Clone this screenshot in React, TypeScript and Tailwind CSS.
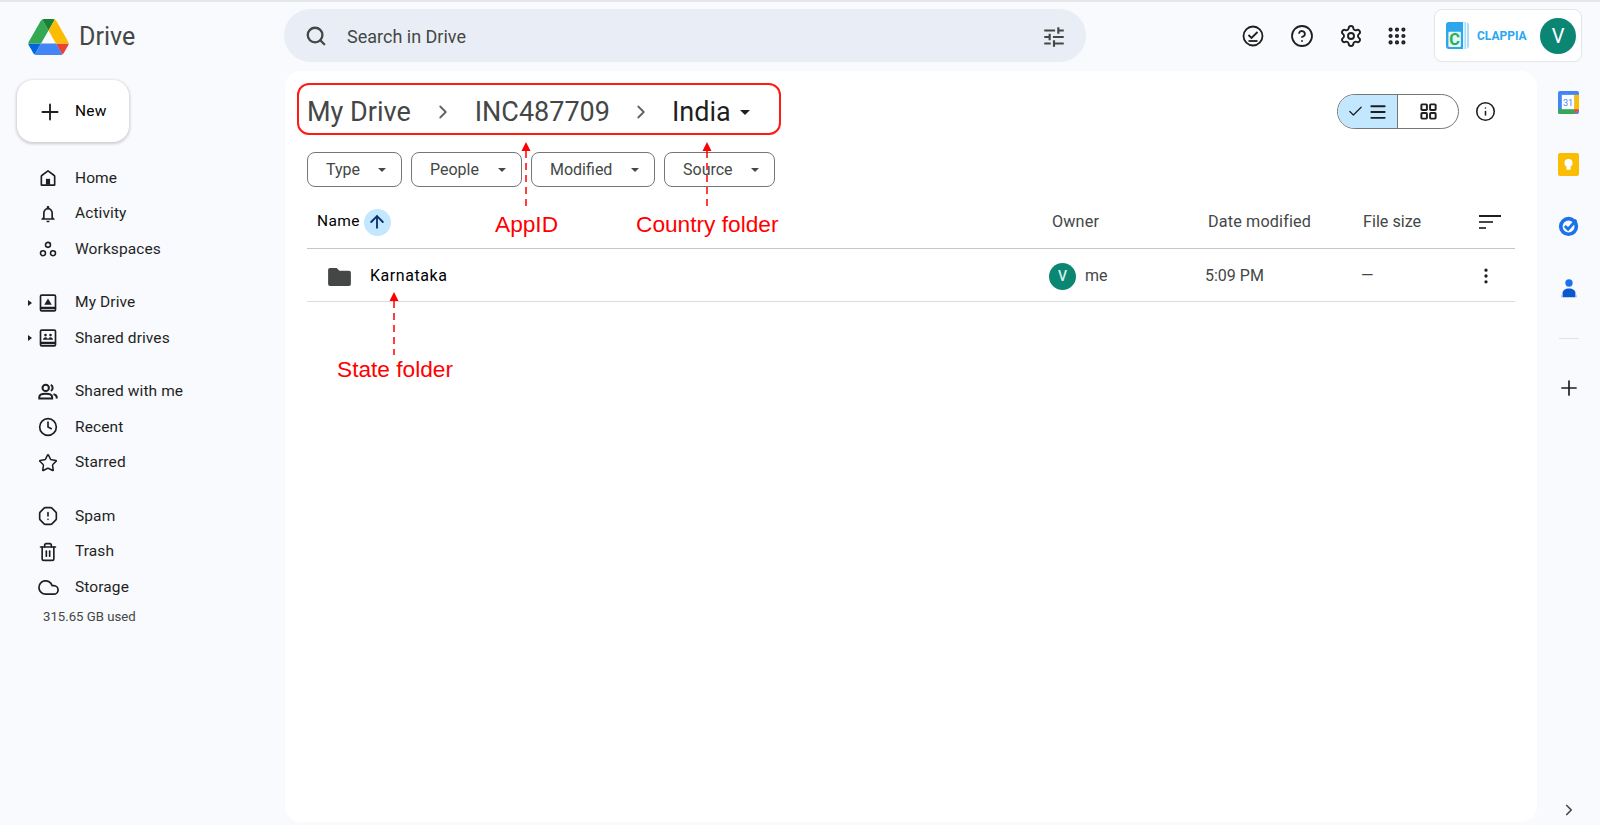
import type { ReactNode } from "react";
import {
  ArrowUp,
  Check,
  ChevronRight,
  CircleHelp,
  Clock,
  Cloud,
  EllipsisVertical,
  Grip,
  Info,
  LayoutGrid,
  Menu,
  OctagonAlert,
  Plus,
  Search,
  Settings,
  Star,
  Trash2,
} from "lucide-react";

const font = "font-['Roboto',sans-serif]";

function DriveLogo() {
  return (
    <svg viewBox="0 0 87.3 78" className="w-[41px] h-[36px]">
      <path d="m6.6 66.85 3.85 6.65c.8 1.4 1.95 2.5 3.3 3.3l13.75-23.8h-27.5c0 1.55.4 3.1 1.2 4.5z" fill="#0066da" />
      <path d="m43.65 25-13.75-23.8c-1.35.8-2.5 1.9-3.3 3.3l-25.4 44a9.06 9.06 0 0 0 -1.2 4.5h27.5z" fill="#34a853" />
      <path d="m73.55 76.8c1.35-.8 2.5-1.9 3.3-3.3l1.6-2.75 7.65-13.25c.8-1.4 1.2-2.95 1.2-4.5h-27.502l5.852 11.5z" fill="#ea4335" />
      <path d="m43.65 25 13.75-23.8c-1.35-.8-2.9-1.2-4.5-1.2h-18.5c-1.6 0-3.15.45-4.5 1.2z" fill="#188038" />
      <path d="m59.8 53h-32.3l-13.75 23.8c1.35.8 2.9 1.2 4.5 1.2h50.8c1.6 0 3.15-.45 4.5-1.2z" fill="#4285f4" />
      <path d="m73.4 26.5-12.7-22c-.8-1.4-1.95-2.5-3.3-3.3l-13.75 23.8 16.15 28h27.45c0-1.55-.4-3.1-1.2-4.5z" fill="#fbbc04" />
    </svg>
  );
}

function HomeIcon() {
  return (
    <svg viewBox="0 0 24 24" className="w-[20px] h-[20px]" fill="none" stroke="#1f1f1f" strokeWidth="2">
      <path d="M4 20.5V10c0-.5.2-.8.5-1L12 3.5 19.5 9c.3.2.5.5.5 1v10.5z" strokeLinejoin="round" />
      <rect x="9.5" y="13" width="5" height="7" fill="#1f1f1f" stroke="none" />
    </svg>
  );
}

function BellIcon() {
  return (
    <svg viewBox="0 0 24 24" className="w-[20px] h-[20px]" fill="#1f1f1f">
      <path d="M12 22c1.1 0 2-.9 2-2h-4c0 1.1.9 2 2 2zm6-6v-5c0-3.07-1.63-5.64-4.5-6.32V4c0-.83-.67-1.5-1.5-1.5s-1.5.67-1.5 1.5v.68C7.64 5.36 6 7.92 6 11v5l-2 2v1h16v-1l-2-2zm-2 1H8v-6c0-2.48 1.51-4.5 4-4.5s4 2.02 4 4.5v6z" />
    </svg>
  );
}

function WorkspacesIcon() {
  return (
    <svg viewBox="0 0 24 24" className="w-[20px] h-[20px]" fill="none" stroke="#1f1f1f" strokeWidth="1.9">
      <circle cx="12" cy="7" r="3" />
      <circle cx="6" cy="17" r="3" />
      <circle cx="18" cy="17" r="3" />
    </svg>
  );
}

function MyDriveIcon() {
  return (
    <svg viewBox="0 0 24 24" className="w-[20px] h-[22px]" fill="none" stroke="#1f1f1f" strokeWidth="2">
      <rect x="3" y="2.5" width="18" height="19" rx="1.5" />
      <path d="M3 18h18" strokeWidth="3" />
      <path d="M12 6.5l4.5 7.5h-9z" fill="#1f1f1f" stroke="none" />
    </svg>
  );
}

function SharedDrivesIcon() {
  return (
    <svg viewBox="0 0 24 24" className="w-[20px] h-[22px]" fill="none" stroke="#1f1f1f" strokeWidth="2">
      <rect x="3" y="2.5" width="18" height="19" rx="1.5" />
      <path d="M3 18h18" strokeWidth="3" />
      <circle cx="9" cy="8.5" r="1.6" fill="#1f1f1f" stroke="none" />
      <circle cx="15" cy="8.5" r="1.6" fill="#1f1f1f" stroke="none" />
      <path d="M6 14c0-2 1.5-3 3-3s3 1 3 3zM12 14c0-2 1.500-3 3-3s3 1 3 3z" fill="#1f1f1f" stroke="none" />
    </svg>
  );
}

function SharedWithMeIcon() {
  return (
    <svg viewBox="0 0 24 24" className="w-[22px] h-[22px]" fill="none" stroke="#1f1f1f" strokeWidth="2.2">
      <circle cx="9.500" cy="7.500" r="3.500" />
      <path d="M2.500 19v-1.500c0-2.500 3.500-3.700 7-3.700s7 1.200 7 3.700V19z" />
      <path d="M15 4.300a3.500 3.500 0 0 1 0 6.400" />
      <path d="M18 14.300c2 .6 3.500 1.700 3.500 3.300V19" />
    </svg>
  );
}

function TuneIcon() {
  return (
    <svg viewBox="0 0 24 24" className="w-[26px] h-[26px]" fill="#444746">
      <path d="M3 17v2h6v-2H3zM3 5v2h10V5H3zm10 16v-2h8v-2h-8v-2h-2v6h2zM7 9v2H3v2h4v2h2V9H7zm14 4v-2H11v2h10zm-6-4h2V7h4V5h-4V3h-2v6z" />
    </svg>
  );
}

function TaskCircleIcon() {
  return (
    <svg viewBox="0 0 24 24" className="w-[24px] h-[24px]" fill="none" stroke="#1f1f1f" strokeWidth="1.8">
      <circle cx="12" cy="12" r="9.500" />
      <path d="M7.500 11l3 3 6-6" />
      <path d="M7.500 17h9" />
    </svg>
  );
}

function ClappiaLogo() {
  return (
    <svg viewBox="0 0 24 28" className="w-[23px] h-[27px]">
      <path d="M3 0h15v28H3a3 3 0 0 1-3-3V3a3 3 0 0 1 3-3z" fill="#2ea6ee" />
      <path d="M18 0h2c2 0 4 1 4 3v22c0 2-2 3-4 3h-2z" fill="#a9dcfa" />
      <rect x="18" y="0" width="1.200" height="28" fill="#ffffff" />
      <rect x="21" y="0" width="1" height="28" fill="#ffffff" />
      <rect x="2.500" y="10" width="13" height="16" rx="1" fill="#e8f7f0" />
      <text x="9" y="24" textAnchor="middle" fontSize="17" fontWeight="700" fontFamily="Roboto, sans-serif" fill="#1fb25a">
        C
      </text>
    </svg>
  );
}

function CalendarIcon() {
  return (
    <svg viewBox="0 0 22 24" className="w-[21px] h-[23px]">
      <rect x="0" y="0" width="22" height="24" rx="2" fill="#4285f4" />
      <path d="M17 4h5v15l-5 5z" fill="#fbbc04" />
      <path d="M0 19h17v5H2a2 2 0 0 1-2-2z" fill="#34a853" />
      <path d="M17 19h5l-5 5z" fill="#ea4335" />
      <rect x="4" y="4" width="13" height="15" fill="#ffffff" />
      <text x="10.500" y="15.500" textAnchor="middle" fontSize="9.500" fontFamily="Roboto, sans-serif" fill="#4285f4">
        31
      </text>
    </svg>
  );
}

function KeepIcon() {
  return (
    <svg viewBox="0 0 22 24" className="w-[21px] h-[23px]">
      <path d="M2 0h18a2 2 0 0 1 2 2v20a2 2 0 0 1-2 2H2a2 2 0 0 1-2-2V2a2 2 0 0 1 2-2z" fill="#fbbc04" />
      <circle cx="11" cy="10.500" r="4.200" fill="#ffffff" />
      <rect x="8.800" y="14" width="4.400" height="3.500" fill="#ffffff" />
    </svg>
  );
}

function TasksIcon() {
  return (
    <svg viewBox="0 0 24 24" className="w-[22px] h-[22px]" fill="none">
      <circle cx="11.500" cy="12.500" r="8.500" stroke="#1a73e8" strokeWidth="4" />
      <path d="M7.500 12l3.500 3.500 9-10" stroke="#1a73e8" strokeWidth="3" />
    </svg>
  );
}

function ContactsIcon() {
  return (
    <svg viewBox="0 0 24 24" className="w-[22px] h-[22px]">
      <circle cx="12" cy="6.500" r="4" fill="#1a73e8" />
      <path d="M5 22v-4.500c0-3 3-5 7-5s7 2 7 5V22z" fill="#0b57d0" />
      <path d="M3.500 22c0-1 .5-3 1.500-4v4zM20.500 22c0-1-.5-3-1.500-4v4z" fill="#8ab4f8" />
    </svg>
  );
}

function NavRow({ icon, label, caret }: { icon: ReactNode; label: string; caret?: boolean }) {
  return (
    <div className="flex items-center h-[35.5px]">
      <div className="w-[36px] pl-[28px] flex items-center">
        {caret && <div className="w-0 h-0 border-y-[3.500px] border-y-transparent border-l-[4px] border-l-[#1f1f1f]" />}
      </div>
      <div className="w-[24px] flex justify-center items-center">{icon}</div>
      <span className="ml-[15px] text-[15.500px] tracking-[0.1px] text-[#1f1f1f]">{label}</span>
    </div>
  );
}

function FilterChip({ label, width }: { label: string; width: string }) {
  return (
    <div className={`${width} h-[35px] border border-[#747775] rounded-[8px] flex items-center justify-between pl-[18px] pr-[15px]`}>
      <span className="text-[16px] text-[#444746]">{label}</span>
      <div className="w-0 h-0 border-x-[4.500px] border-x-transparent border-t-[4.500px] border-t-[#444746]" />
    </div>
  );
}

// red notes drawn over the page
function Note({ x, tipY, endY, children, textClass }: { x: string; tipY: string; endY: number; children: ReactNode; textClass: string }) {
  return (
    <>
      <div className={`absolute ${x} ${tipY} flex flex-col items-center w-0`}>
        <svg width="12" height={endY} className="shrink-0" viewBox={`0 0 12 ${endY}`}>
          <path d="M6 0l4.500 9h-9z" fill="#ff0000" />
          <path d={`M6 9V${endY}`} stroke="#ff0000" strokeWidth="1.500" strokeDasharray="7 5" />
        </svg>
      </div>
      <span className={`absolute ${textClass} font-['Liberation_Sans',sans-serif] text-[22.700px] leading-[26px] text-[#ff0000] whitespace-nowrap`}>{children}</span>
    </>
  );
}

export default function App() {
  return (
    <div className={`${font} relative w-[1600px] h-[825px] overflow-hidden bg-[#f8fafd] border-t-2 border-[#e6e7e9] flex flex-col`}>
      {/* top bar */}
      <header className="h-[69px] shrink-0 flex items-start pt-[7px]">
        <div className="w-[284px] flex items-center pl-[28px] pt-[10px]">
          <DriveLogo />
          <span className="ml-[10px] text-[25px] leading-[36px] text-[#444746]">Drive</span>
        </div>
        <div className="w-[802px] h-[53px] rounded-full bg-[#e9eef6] flex items-center pl-[21px] pr-[19px]">
          <Search size={22} strokeWidth={2.500} className="text-[#444746]" />
          <span className="ml-[20px] mt-[2px] text-[18px] text-[#444746]">Search in Drive</span>
          <div className="ml-auto mt-[2px]"><TuneIcon /></div>
        </div>
        <div className="w-[348px] h-[53px] flex items-center pl-[155px] gap-[25px] text-[#1f1f1f]">
          <TaskCircleIcon />
          <CircleHelp size={24} strokeWidth={1.800} />
          <Settings size={24} strokeWidth={1.900} />
          <Grip size={22} strokeWidth={2.600} className="-ml-[2px]" />
        </div>
        <div className="w-[148px] h-[53px] bg-white border border-[#e3e5e8] rounded-[8px] flex items-center pl-[11px] pr-[5px]">
          <ClappiaLogo />
          <span className="ml-[8px] text-[12px] font-bold text-[#29a8f2]">CLAPPIA</span>
          <div className="ml-auto w-[36px] h-[36px] rounded-full bg-[#0b8673] text-white text-[20px] flex items-center justify-center">V</div>
        </div>
      </header>

      <div className="flex-1 flex min-h-0">
        {/* left nav */}
        <aside className="w-[285px] shrink-0 flex flex-col">
          <div className="ml-[17px] mt-[9px] w-[112px] h-[62px] bg-white rounded-[16px] shadow-[0_1px_3px_1px_rgba(0,0,0,0.18)] flex items-center pl-[20px]">
            <Plus size={26} strokeWidth={1.700} className="mt-[2px] text-[#1f1f1f]" />
            <span className="ml-[12px] mt-[2px] text-[15.500px] tracking-[0.2px] text-black">New</span>
          </div>
          <nav className="mt-[18.500px] flex flex-col gap-[18px]">
            <div>
              <NavRow icon={<HomeIcon />} label="Home" />
              <NavRow icon={<BellIcon />} label="Activity" />
              <NavRow icon={<WorkspacesIcon />} label="Workspaces" />
            </div>
            <div>
              <NavRow caret icon={<MyDriveIcon />} label="My Drive" />
              <NavRow caret icon={<SharedDrivesIcon />} label="Shared drives" />
            </div>
            <div>
              <NavRow icon={<SharedWithMeIcon />} label="Shared with me" />
              <NavRow icon={<Clock size={20} strokeWidth={2} className="text-[#1f1f1f]" />} label="Recent" />
              <NavRow icon={<Star size={20} strokeWidth={1.800} className="text-[#1f1f1f]" />} label="Starred" />
            </div>
            <div>
              <NavRow icon={<OctagonAlert size={20} strokeWidth={2} className="text-[#1f1f1f]" />} label="Spam" />
              <NavRow icon={<Trash2 size={20} strokeWidth={2} className="text-[#1f1f1f]" />} label="Trash" />
              <NavRow icon={<Cloud size={23} strokeWidth={1.800} className="text-[#1f1f1f]" />} label="Storage" />
              <div className="ml-[43px] mt-[4px] text-[13.200px] leading-[16px] text-[#444746]">315.65 GB used</div>
            </div>
          </nav>
        </aside>

        {/* main panel */}
        <main className="relative w-[1252px] shrink-0 mb-[3px] bg-white rounded-[16px] pt-[12px] pl-[12px]">
          <div className="flex items-start">
            <div className="w-[484px] h-[52px] border-2 border-[#ff1a12] rounded-[12px] flex items-center pl-[8px] pt-[6px] text-[27px] text-[#444746]">
              <span>My Drive</span>
              <ChevronRight size={22} strokeWidth={2} className="ml-[21px] text-[#5f6368]" />
              <span className="ml-[21px]">INC487709</span>
              <ChevronRight size={22} strokeWidth={2} className="ml-[20px] text-[#5f6368]" />
              <span className="ml-[20px] text-[#1f1f1f]">India</span>
              <div className="ml-[9px] w-0 h-0 border-x-[5.500px] border-x-transparent border-t-[5.500px] border-t-[#1f1f1f]" />
            </div>
            <div className="ml-[556px] mt-[11px] w-[122px] h-[35px] border border-[#747775] rounded-full flex overflow-hidden">
              <div className="w-[60px] bg-[#c2e7ff] border-r border-[#747775] flex items-center justify-center gap-[4px] text-[#1f1f1f]">
                <Check size={17} strokeWidth={1.700} />
                <Menu size={20} strokeWidth={2.300} />
              </div>
              <div className="flex-1 flex items-center justify-center text-[#1f1f1f]">
                <LayoutGrid size={19} strokeWidth={2.500} />
              </div>
            </div>
            <Info size={21} strokeWidth={1.800} className="ml-[16px] mt-[18px] text-[#1f1f1f]" />
          </div>

          <div className="mt-[17px] ml-[10px] flex gap-[9px]">
            <FilterChip label="Type" width="w-[95px]" />
            <FilterChip label="People" width="w-[111px]" />
            <FilterChip label="Modified" width="w-[124px]" />
            <FilterChip label="Source" width="w-[111px]" />
          </div>

          <div className="ml-[10px] w-[1208px] h-[62px] pt-[9px] border-b border-[#c7c7c7] grid grid-cols-[745px_156px_155px_1fr] items-center text-[16.200px] text-[#444746]">
            <div className="pl-[10px] flex items-center gap-[4px] text-[15.500px] tracking-[0.4px] text-black">
              <span>Name</span>
              <div className="w-[27px] h-[27px] rounded-full bg-[#c2e7ff] flex items-center justify-center text-[#062e6f]">
                <ArrowUp size={20} strokeWidth={2.200} />
              </div>
            </div>
            <span className="tracking-[0.15px]">Owner</span>
            <span className="tracking-[0.15px]">Date modified</span>
            <div className="flex items-center justify-between pr-[14px]">
              <span>File size</span>
              <svg viewBox="0 0 22 16" className="w-[22px] h-[16px]">
                <rect x="0" y="1" width="22" height="2" fill="#1f1f1f" />
                <rect x="0" y="7" width="14" height="2" fill="#444746" />
                <rect x="0" y="13" width="7" height="2" fill="#444746" />
              </svg>
            </div>
          </div>

          <div className="ml-[10px] w-[1208px] h-[53px] pt-[2px] border-b border-[#dadce0] grid grid-cols-[745px_156px_155px_1fr] items-center text-[16px] text-[#444746]">
            <div className="pl-[21px] flex items-center">
              <svg viewBox="0 0 24 20" className="w-[23px] h-[19px]">
                <path d="M2 1h7l3 3h10a2 2 0 0 1 2 2v12a2 2 0 0 1-2 2H2a2 2 0 0 1-2-2V3a2 2 0 0 1 2-2z" fill="#444746" />
              </svg>
              <span className="ml-[19px] text-[16px] tracking-[0.55px] text-black">Karnataka</span>
            </div>
            <div className="-ml-[3px] flex items-center">
              <div className="w-[27px] h-[27px] rounded-full bg-[#0b8673] text-[#d5efe9] text-[14px] font-medium flex items-center justify-center">V</div>
              <span className="ml-[9px]">me</span>
            </div>
            <span className="-ml-[3px]">5:09 PM</span>
            <div className="-ml-[2px] flex items-center justify-between pr-[19px]">
              <span>—</span>
              <EllipsisVertical size={20} strokeWidth={2} className="text-[#1f1f1f]" />
            </div>
          </div>

          <Note x="left-[241px]" tipY="top-[71px]" endY={67} textClass="left-[210px] top-[140px]">AppID</Note>
          <Note x="left-[422px]" tipY="top-[71px]" endY={67} textClass="left-[351px] top-[140px]">Country folder</Note>
          <Note x="left-[109px]" tipY="top-[221px]" endY={63} textClass="left-[52px] top-[285px]">State folder</Note>
        </main>

        {/* right rail */}
        <aside className="flex-1 flex flex-col items-center pb-[6px]">
          <div className="h-[62px] flex items-center"><CalendarIcon /></div>
          <div className="h-[62px] flex items-center"><KeepIcon /></div>
          <div className="h-[62px] flex items-center"><TasksIcon /></div>
          <div className="h-[62px] flex items-center"><ContactsIcon /></div>
          <div className="mt-[19px] w-[20px] h-px bg-[#dfe3e9]" />
          <Plus size={24} strokeWidth={1.700} className="mt-[37px] text-[#1f1f1f]" />
          <ChevronRight size={18} strokeWidth={2.200} className="mt-auto text-[#444746]" />
        </aside>
      </div>
    </div>
  );
}
